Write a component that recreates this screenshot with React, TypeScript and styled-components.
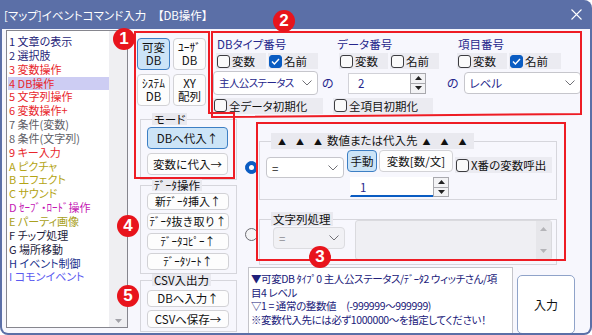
import React from "react";
import styled, { createGlobalStyle } from "styled-components";

const NAVY = "#26268c";

const GlobalStyle = createGlobalStyle`
  html, body { margin: 0; padding: 0; background: #fff; }
  body {
    font-family: "Noto Sans CJK JP", "Noto Sans", sans-serif;
    font-size: 11.5px;
    font-feature-settings: "palt" 1;
  }
  * { box-sizing: border-box; }
`;

const Window = styled.div`
  position: relative;
  width: 592px;
  height: 335px;
  padding: 0 2px 2px 2px;
  background: #5b6fa7;
  border-radius: 0 8px 8px 8px;
  display: flex;
  flex-direction: column;
  overflow: hidden;
`;

const TitleBar = styled.div`
  height: 29px;
  flex: none;
  display: flex;
  align-items: center;
  justify-content: space-between;
  padding: 0 8px 0 2px;
  color: #fff;
  font-size: 11.5px;
`;

const Body = styled.div`
  flex: 1;
  display: flex;
  padding: 1px 0 0 4px;
  background: #f7f7fd;
  border-radius: 0 0 6px 6px;
  overflow: hidden;
`;

/* ---- command list ---- */

const CommandList = styled.div`
  width: 122px;
  height: 298px;
  flex: none;
  display: flex;
  background: #fff;
  border: 1px solid #86868e;
`;

const ListItems = styled.div`
  flex: 1;
  padding-top: 4px;
`;

const ListItem = styled.div<{ $color: string; $selected?: boolean }>`
  height: 13.85px;
  line-height: 13.85px;
  margin-left: 1px;
  padding-left: 1px;
  font-size: 11px;
  white-space: nowrap;
  color: ${(p) => p.$color};
  background: ${(p) => (p.$selected ? "#cdcdf3" : "transparent")};
`;

const ScrollTrack = styled.div`
  width: 18px;
  display: flex;
  flex-direction: column;
  justify-content: flex-end;
  align-items: center;
  padding-bottom: 4px;
  background: #efeff2;
`;

/* ---- right side ---- */

const RightArea = styled.div`
  flex: 1;
  margin-left: 7px;
  display: flex;
  flex-direction: column;
`;

const TopRow = styled.div`
  display: flex;
  height: 84px;
  flex: none;
`;

const TypeGrid = styled.div`
  margin: 8px 0 0 2px;
  align-self: flex-start;
  display: grid;
  grid-template-columns: 33px 33px;
  grid-auto-rows: 32px;
  gap: 4px 3px;
`;

const Btn = styled.button<{ $on?: boolean; $w?: number; $h: number; $fs?: number }>`
  width: ${(p) => (p.$w ? `${p.$w}px` : "100%")};
  height: ${(p) => p.$h}px;
  padding: 0;
  border-radius: 4px;
  border: 1px solid ${(p) => (p.$on ? "#3d7fc4" : "#d2d2d6")};
  background: ${(p) => (p.$on ? "#cce4f7" : "#fdfdfd")};
  color: #111;
  font-family: inherit;
  font-size: ${(p) => p.$fs ?? 11.5}px;
  line-height: 13px;
  white-space: pre-line;
  flex: none;
`;

const DbSelect = styled.div`
  margin: 3px 0 0 7px;
  display: grid;
  grid-template-columns: 120px 112px 135px;
  grid-template-rows: 18px 16px 24px 17px;
  row-gap: 2px;
`;

const FieldLabel = styled.div<{ $pl: number }>`
  align-self: end;
  padding-left: ${(p) => p.$pl}px;
  line-height: 14px;
  color: ${NAVY};
`;

const Row = styled.div<{ $pl?: number; $gap?: number }>`
  display: flex;
  align-items: center;
  gap: ${(p) => p.$gap ?? 2}px;
  padding-left: ${(p) => p.$pl ?? 0}px;
`;

const CheckItem = styled.div<{ $w: number }>`
  width: ${(p) => p.$w}px;
  height: 16px;
  flex: none;
  display: flex;
  align-items: center;
  gap: 2px;
  padding-left: 1px;
  background: #ebebf1;
  color: #111;
  line-height: 14px;
  white-space: nowrap;
`;

const Box = styled.span<{ $on?: boolean }>`
  width: 13px;
  height: 13px;
  flex: none;
  border-radius: 3px;
  border: 1px solid ${(p) => (p.$on ? "#0a5cc2" : "#3c3c40")};
  background: ${(p) => (p.$on ? "#0a5cc2" : "#fafafa")};
  display: flex;
  align-items: center;
  justify-content: center;
`;

const SelectBox = styled.div<{ $w: number; $h: number; $off?: boolean; $color?: string }>`
  width: ${(p) => p.$w}px;
  height: ${(p) => p.$h}px;
  flex: none;
  display: flex;
  align-items: center;
  gap: 3px;
  padding: 0 5px 0 4px;
  background: ${(p) => (p.$off ? "#f1f1f5" : "#fff")};
  border: 1px solid ${(p) => (p.$off ? "#dcdce0" : "#c6c6cc")};
  border-radius: 4px;
  color: ${(p) => (p.$off ? "#8e8e94" : p.$color ?? NAVY)};
  line-height: 14px;
  white-space: nowrap;
`;

const SelectText = styled.span<{ $fs?: number; $ls?: number }>`
  flex: 1;
  min-width: 0;
  padding-left: 1px;
  font-size: ${(p) => p.$fs ?? 11.5}px;
  letter-spacing: ${(p) => p.$ls ?? 0}px;
  overflow: hidden;
`;

const Of = styled.span`
  color: ${NAVY};
  font-size: 12px;
  line-height: 14px;
`;

const SpinBox = styled.div<{ $w: number; $h: number }>`
  width: ${(p) => p.$w}px;
  height: ${(p) => p.$h}px;
  flex: none;
  display: flex;
`;

const SpinValue = styled.div<{ $focus?: boolean }>`
  flex: 1;
  display: flex;
  align-items: center;
  padding-left: 9px;
  background: #fff;
  color: ${NAVY};
  border: 1px solid ${(p) => (p.$focus ? "#fff" : "#d2d2d8")};
  border-right: none;
  border-bottom: ${(p) => (p.$focus ? "2px solid #0a5cc2" : "1px solid #d2d2d8")};
`;

const SpinArrows = styled.div`
  width: 16px;
  display: flex;
  flex-direction: column;
  border: 1px solid #a9a9ae;
  background: #f3f3f5;
`;

const SpinArrow = styled.div`
  flex: 1;
  display: flex;
  align-items: center;
  justify-content: center;
  & + & { border-top: 1px solid #a9a9ae; }
`;

/* ---- lower part ---- */

const BottomRow = styled.div`
  flex: 1;
  display: flex;
`;

const SideCol = styled.div`
  width: 97px;
  margin-left: 5px;
  flex: none;
  display: flex;
  flex-direction: column;
`;

const Group = styled.fieldset<{ $mt?: number; $pad: string }>`
  margin: ${(p) => p.$mt ?? 0}px 0 0 0;
  padding: ${(p) => p.$pad};
  min-width: 0;
  border: 1px solid #d6d6dc;
`;

const Legend = styled.legend<{ $lh: number; $ml?: number }>`
  margin-left: ${(p) => p.$ml ?? 5}px;
  padding: 0 2px;
  background: #e9e9ef;
  color: #111;
  line-height: ${(p) => p.$lh}px;
  white-space: nowrap;
`;

const Stack = styled.div<{ $gap: number }>`
  display: flex;
  flex-direction: column;
  gap: ${(p) => p.$gap}px;
`;

const MainArea = styled.div`
  flex: 1;
  margin-left: 6px;
  display: flex;
  flex-direction: column;
`;

const ValueSection = styled.div`
  margin-top: 19px;
  display: grid;
  grid-template-columns: 16px 298px;
  row-gap: 12px;
`;

const Radio = styled.span<{ $on?: boolean; $mt: number }>`
  align-self: start;
  justify-self: center;
  margin-top: ${(p) => p.$mt}px;
  width: 13px;
  height: 13px;
  border-radius: 50%;
  border: 1px solid ${(p) => (p.$on ? "#0a5cc2" : "#6a6a70")};
  background: ${(p) => (p.$on ? "#0a5cc2" : "#f4f4f6")};
  display: flex;
  align-items: center;
  justify-content: center;
  &::after {
    content: "";
    display: ${(p) => (p.$on ? "block" : "none")};
    width: 5px;
    height: 5px;
    border-radius: 50%;
    background: #fff;
  }
`;

const Tri = styled.span`
  display: inline-block;
  width: 18px;
  text-align: center;
  font-size: 8px;
`;

const Line = styled.div<{ $ml?: number; $mt?: number }>`
  display: flex;
  align-items: flex-start;
  margin-left: ${(p) => p.$ml ?? 0}px;
  margin-top: ${(p) => p.$mt ?? 0}px;
`;

const Shift = styled.div<{ $ml?: number; $mt?: number }>`
  margin-left: ${(p) => p.$ml ?? 0}px;
  margin-top: ${(p) => p.$mt ?? 0}px;
  flex: none;
`;

const TextArea = styled.div`
  width: 197px;
  height: 40px;
  margin: -6px 0 0 10px;
  display: flex;
  justify-content: flex-end;
  background: #efeff3;
  border: 1px solid #dadade;
  border-radius: 3px;
`;

const AreaScroll = styled.div`
  width: 15px;
  display: flex;
  flex-direction: column;
  justify-content: space-between;
  align-items: center;
  padding: 6px 0;
  background: #e6e6ea;
`;

const InfoRow = styled.div`
  display: flex;
  margin-top: 2px;
`;

const InfoBox = styled.div`
  width: 265px;
  height: 72px;
  margin-left: 5px;
  padding: 4px 2px;
  background: #fff;
  border: 1px solid #c4c4ca;
  border-bottom: none;
  color: #20207a;
  font-size: 10.5px;
  letter-spacing: -0.4px;
  line-height: 13.7px;
  white-space: pre;
  overflow: hidden;
`;

const SubmitBtn = styled.button`
  width: 58px;
  height: 59px;
  margin: 8px 0 0 4px;
  background: #fff;
  border: 1px solid #8fa3c9;
  border-radius: 5px;
  color: #111;
  font-family: inherit;
  font-size: 12px;
`;

/* ---- annotations ---- */

const Overlay = styled.svg`
  position: absolute;
  left: 0;
  top: 0;
  pointer-events: none;
`;

const Badge = styled.div<{ $x: number; $y: number }>`
  position: absolute;
  left: ${(p) => p.$x - 11}px;
  top: ${(p) => p.$y - 11}px;
  width: 22px;
  height: 22px;
  border-radius: 50%;
  background: #e8141c;
  color: #fff;
  font: bold 17px "Liberation Sans", sans-serif;
  display: flex;
  align-items: center;
  justify-content: center;
`;

/* ---- small drawings ---- */

const Chevron = () => (
  <svg width="10" height="6" viewBox="0 0 10 6">
    <polyline points="0.5,0.5 5,5 9.5,0.5" fill="none" stroke="#707076" strokeWidth="1" />
  </svg>
);

const Tick = () => (
  <svg width="9" height="7" viewBox="0 0 9 7">
    <polyline points="1,3.6 3.4,6 8,1" fill="none" stroke="#fff" strokeWidth="1.4" />
  </svg>
);

const Arrow = ({ down, color = "#222" }: { down?: boolean; color?: string }) => (
  <svg width="7" height="4" viewBox="0 0 7 4">
    <polygon points={down ? "0,0 7,0 3.5,4" : "0,4 7,4 3.5,0"} fill={color} />
  </svg>
);

const Close = () => (
  <svg width="11" height="11" viewBox="0 0 11 11">
    <path d="M0.5 0.5 L10.5 10.5 M10.5 0.5 L0.5 10.5" stroke="#fff" strokeWidth="1.1" />
  </svg>
);

const Checkbox = ({ label, on, w }: { label: string; on?: boolean; w: number }) => (
  <CheckItem $w={w}>
    <Box $on={on}>{on && <Tick />}</Box>
    {label}
  </CheckItem>
);

const Dropdown = (props: {
  text: string;
  w: number;
  h: number;
  off?: boolean;
  color?: string;
  fs?: number;
  ls?: number;
}) => (
  <SelectBox $w={props.w} $h={props.h} $off={props.off} $color={props.color}>
    <SelectText $fs={props.fs} $ls={props.ls}>{props.text}</SelectText>
    <Chevron />
  </SelectBox>
);

const Spin = ({ value, w, h, focus }: { value: string; w: number; h: number; focus?: boolean }) => (
  <SpinBox $w={w} $h={h}>
    <SpinValue $focus={focus}>{value}</SpinValue>
    <SpinArrows>
      <SpinArrow><Arrow /></SpinArrow>
      <SpinArrow><Arrow down /></SpinArrow>
    </SpinArrows>
  </SpinBox>
);

const commands = [
  { label: "1 文章の表示", color: "#1f1f7a" },
  { label: "2 選択肢", color: "#1f1f7a" },
  { label: "3 変数操作", color: "#e8262c" },
  { label: "4 DB操作", color: "#e8262c", selected: true },
  { label: "5 文字列操作", color: "#e8262c" },
  { label: "6 変数操作+", color: "#e8262c" },
  { label: "7 条件(変数)", color: "#5e5e66" },
  { label: "8 条件(文字列)", color: "#5e5e66" },
  { label: "9 キー入力", color: "#e8262c" },
  { label: "A ピクチャ", color: "#b4a414" },
  { label: "B エフェクト", color: "#b4a414" },
  { label: "C サウンド", color: "#b4a414" },
  { label: "D ｾｰﾌﾞ・ﾛｰﾄﾞ操作", color: "#c418b4" },
  { label: "E パーティ画像", color: "#a8a020" },
  { label: "F チップ処理", color: "#1c1c3c" },
  { label: "G 場所移動", color: "#1c1c3c" },
  { label: "H イベント制御", color: "#20308c" },
  { label: "I コモンイベント", color: "#5a5af0" },
];

const info = [
  "▼可変DB ﾀｲﾌﾟ0 主人公ステータス/ﾃﾞｰﾀ2 ウィッチさん/項",
  "目4 レベル",
  "▽1 = 通常の整数値　(-999999～999999)",
  "※変数代入先には必ず1000000～を指定してください！",
].join("\n");

export default function App() {
  return (
    <>
      <GlobalStyle />
      <Window>
        <TitleBar>
          <span>[マップ]イベントコマンド入力　【DB操作】</span>
          <Close />
        </TitleBar>
        <Body>
          <CommandList>
            <ListItems>
              {commands.map((c) => (
                <ListItem key={c.label} $color={c.color} $selected={c.selected}>
                  {c.label}
                </ListItem>
              ))}
            </ListItems>
            <ScrollTrack>
              <Arrow down color="#a2a2a8" />
            </ScrollTrack>
          </CommandList>

          <RightArea>
            <TopRow>
              <TypeGrid>
                <Btn $on $h={32}>{"可変\nDB"}</Btn>
                <Btn $h={32}>{"ﾕｰｻﾞ\nDB"}</Btn>
                <Btn $h={32}>{"ｼｽﾃﾑ\nDB"}</Btn>
                <Btn $h={32}>{"XY\n配列"}</Btn>
              </TypeGrid>

              <DbSelect>
                <FieldLabel $pl={4}>DBタイプ番号</FieldLabel>
                <FieldLabel $pl={4}>データ番号</FieldLabel>
                <FieldLabel $pl={13}>項目番号</FieldLabel>

                <Row $pl={3}>
                  <Checkbox label="変数" w={50} />
                  <Checkbox label="名前" w={50} on />
                </Row>
                <Row $pl={6}>
                  <Checkbox label="変数" w={49} />
                  <Checkbox label="名前" w={49} />
                </Row>
                <Row $pl={12}>
                  <Checkbox label="変数" w={50} />
                  <Checkbox label="名前" w={52} on />
                </Row>

                <Row $gap={4}>
                  <Dropdown text="主人公ステータス" w={105} h={24} fs={10.5} ls={-0.6} />
                  <Of>の</Of>
                </Row>
                <Row $pl={15}>
                  <Spin value="2" w={78} h={21} />
                </Row>
                <Row $pl={2} $gap={5}>
                  <Of>の</Of>
                  <Dropdown text="レベル" w={117} h={22} />
                </Row>

                <Row>
                  <Checkbox label="全データ初期化" w={110} />
                </Row>
                <Row>
                  <Checkbox label="全項目初期化" w={100} />
                </Row>
              </DbSelect>
            </TopRow>

            <BottomRow>
              <SideCol>
                <Group $mt={-1} $pad="2px 6px 4px 6px">
                  <Legend $lh={12}>モード</Legend>
                  <Stack $gap={4}>
                    <Btn $on $w={81} $h={22}>DBへ代入↑</Btn>
                    <Btn $w={81} $h={22}>変数に代入→</Btn>
                  </Stack>
                </Group>
                <Group $mt={-1} $pad="2px 6px 3px 6px">
                  <Legend $lh={12}>ﾃﾞｰﾀ操作</Legend>
                  <Stack $gap={3}>
                    <Btn $w={82} $h={17} $fs={11}>新ﾃﾞｰﾀ挿入↑</Btn>
                    <Btn $w={82} $h={17} $fs={11}>ﾃﾞｰﾀ抜き取り↑</Btn>
                    <Btn $w={82} $h={17} $fs={11}>ﾃﾞｰﾀｺﾋﾟｰ↑</Btn>
                    <Btn $w={82} $h={17} $fs={11}>ﾃﾞｰﾀｿｰﾄ↑</Btn>
                  </Stack>
                </Group>
                <Group $pad="4px 6px 3px 6px">
                  <Legend $lh={12}>CSV入出力</Legend>
                  <Stack $gap={3}>
                    <Btn $w={82} $h={17}>DBへ入力↑</Btn>
                    <Btn $w={82} $h={18}>CSVへ保存→</Btn>
                  </Stack>
                </Group>
              </SideCol>

              <MainArea>
                <ValueSection>
                  <Radio $on $mt={28} />
                  <Group $pad="1px 4px 2px 6px">
                    <Legend $lh={15} $ml={5}>
                      <Tri>▲</Tri><Tri>▲</Tri><Tri>▲</Tri>
                      数値または代入先
                      <Tri>▲</Tri><Tri>▲</Tri><Tri>▲</Tri>
                    </Legend>
                    <Line>
                      <Shift $mt={7}>
                        <Dropdown text="=" w={78} h={21} color="#222" />
                      </Shift>
                      <Shift $ml={3}>
                        <Btn $on $w={30} $h={22}>手動</Btn>
                      </Shift>
                      <Shift $ml={2}>
                        <Btn $w={74} $h={22}>変数[数/文]</Btn>
                      </Shift>
                      <Shift $ml={2} $mt={7}>
                        <Checkbox label="X番の変数呼出" w={97} />
                      </Shift>
                    </Line>
                    <Line $ml={84} $mt={-1}>
                      <Spin value="1" w={99} h={20} focus />
                    </Line>
                  </Group>

                  <Radio $mt={16} />
                  <Group $pad="0 4px 4px 6px">
                    <Legend $lh={14} $ml={5}>文字列処理</Legend>
                    <Line>
                      <Shift $ml={7} $mt={1}>
                        <Dropdown text="=" w={72} h={22} off />
                      </Shift>
                      <TextArea>
                        <AreaScroll>
                          <Arrow color="#b4b4b8" />
                          <Arrow down color="#b4b4b8" />
                        </AreaScroll>
                      </TextArea>
                    </Line>
                  </Group>
                </ValueSection>

                <InfoRow>
                  <InfoBox>{info}</InfoBox>
                  <SubmitBtn>入力</SubmitBtn>
                </InfoRow>
              </MainArea>
            </BottomRow>
          </RightArea>
        </Body>

        <Overlay width="592" height="335" viewBox="0 0 592 335">
          <polygon points="135,32 209,32 209,113 234,113 234,178 135,178" fill="none" stroke="#ee1c24" strokeWidth="2" />
          <polygon points="212,32 581,32 581,114 212,117" fill="none" stroke="#ee1c24" strokeWidth="2" />
          <rect x="257" y="123" width="308" height="137" fill="none" stroke="#ee1c24" strokeWidth="2" />
        </Overlay>
        <Badge $x={124} $y={39}>1</Badge>
        <Badge $x={284} $y={21}>2</Badge>
        <Badge $x={320} $y={257}>3</Badge>
        <Badge $x={128} $y={226}>4</Badge>
        <Badge $x={128} $y={296}>5</Badge>
      </Window>
    </>
  );
}
